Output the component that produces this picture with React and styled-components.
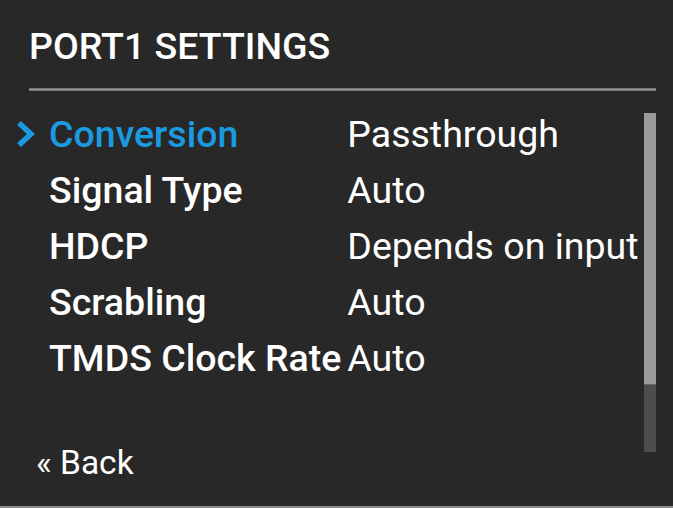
import React from "react";
import styled, { createGlobalStyle } from "styled-components";

const Global = createGlobalStyle`
  html, body { margin: 0; padding: 0; background: #282828; }
  body { font-family: Roboto, "Noto Sans", "Liberation Sans", sans-serif; }
  * { box-sizing: border-box; }
`;

const Screen = styled.div`
  width: 673px;
  height: 508px;
  background: #282828;
  border-bottom: 2px solid #8c8c8c;
  display: flex;
  flex-direction: column;
  color: #ffffff;
  overflow: hidden;
`;

const Header = styled.header`
  padding: 26px 17px 0 29px;
`;

const Title = styled.h1`
  margin: 0;
  font-size: 37.5px;
  font-weight: 500;
  line-height: 40px;
  color: #ffffff;
`;

const Divider = styled.div`
  margin-top: 22px;
  height: 3px;
  background: #8e8e8e;
  border-top: 1px solid #7a7a7a;
  border-bottom: 1px solid #7a7a7a;
`;

const Body = styled.div`
  flex: 1;
  display: flex;
  padding: 15px 17px 23px 0;
  min-height: 0;
`;

const Main = styled.div`
  flex: 1;
  display: flex;
  flex-direction: column;
`;

const List = styled.div`
  display: grid;
  grid-template-columns: 33px auto 1fr;
  padding-left: 16px;
`;

const Row = styled.div`
  display: contents;
`;

const Marker = styled.div`
  height: 56px;
  display: flex;
  align-items: center;
  margin-left: -1px;
  color: #1a9ae0;
`;

const Label = styled.div`
  font-size: 37.5px;
  line-height: 56px;
  font-weight: 500;
  white-space: nowrap;
  color: ${(p) => (p.$active ? "#1a9ae0" : "#ffffff")};
  padding-right: 6px;
`;

const Value = styled.div`
  font-size: 37.5px;
  line-height: 56px;
  font-weight: 400;
  white-space: nowrap;
  color: #ffffff;
`;

const Back = styled.div`
  margin-top: auto;
  padding-left: 36px;
  font-size: 33.5px;
  line-height: 40px;
  font-weight: 400;
  color: #ffffff;
`;

const Scrollbar = styled.div`
  width: 12px;
  height: 339px;
  margin-top: 7px;
  background: #4d4d4d;
  display: flex;
  flex-direction: column;
`;

const Thumb = styled.div`
  height: ${(p) => p.$size}px;
  background: #9a9a9a;
  border-bottom: 1px solid #666;
`;

const Chevron = () => (
  <svg width="22" height="28" viewBox="0 0 22 28" aria-hidden="true">
    <polyline
      points="4,3 16,14 4,25"
      fill="none"
      stroke="currentColor"
      strokeWidth="5.5"
      strokeLinejoin="miter"
    />
  </svg>
);

const items = [
  { label: "Conversion", value: "Passthrough", active: true },
  { label: "Signal Type", value: "Auto" },
  { label: "HDCP", value: "Depends on input" },
  { label: "Scrabling", value: "Auto" },
  { label: "TMDS Clock Rate", value: "Auto" },
];

export default function App() {
  return (
    <>
      <Global />
      <Screen>
        <Header>
          <Title>PORT1 SETTINGS</Title>
          <Divider />
        </Header>
        <Body>
          <Main>
            <List>
              {items.map((it) => (
                <Row key={it.label}>
                  <Marker>{it.active ? <Chevron /> : null}</Marker>
                  <Label $active={it.active}>{it.label}</Label>
                  <Value>{it.value}</Value>
                </Row>
              ))}
            </List>
            <Back>« Back</Back>
          </Main>
          <Scrollbar>
            <Thumb $size={272} />
          </Scrollbar>
        </Body>
      </Screen>
    </>
  );
}
